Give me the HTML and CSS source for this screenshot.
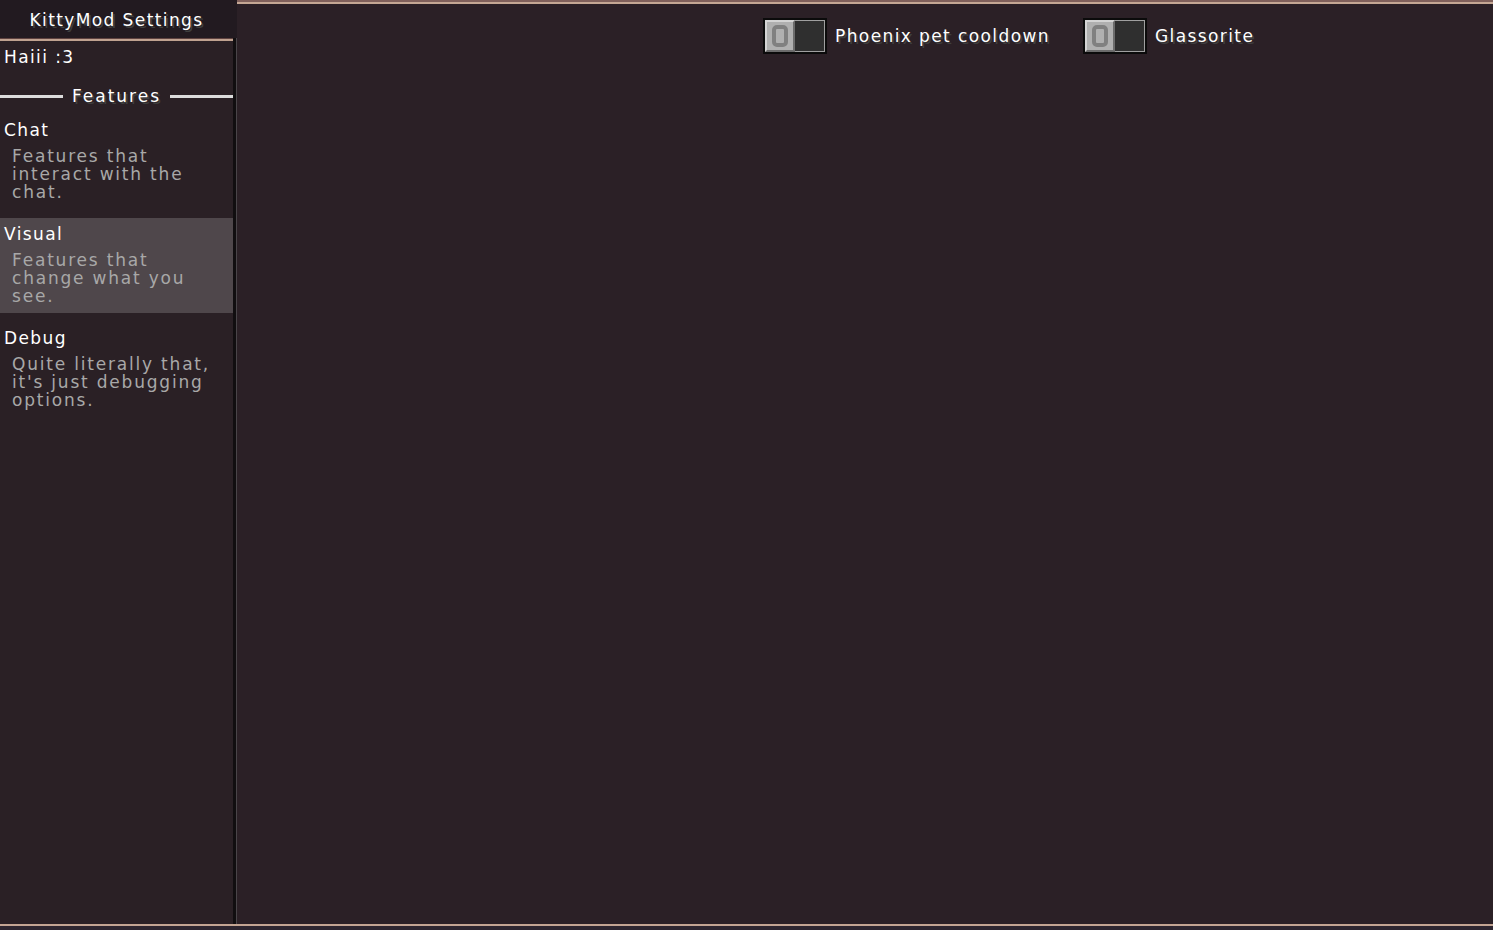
FILE: index.html
```html
<!DOCTYPE html>
<html lang="en">
<head>
    <meta charset="UTF-8">
    <meta name="viewport" content="width=device-width, initial-scale=1.0">
    <title>KittyMod Settings</title>
    <link rel="stylesheet" href="styles.css">
</head>
<body>
    <div class="screen">
        <div class="side">
            <div class="header">KittyMod Settings</div>
            <div class="nav">
                <div class="nav-rule"></div>
                <div class="greeting">Haiii :3</div>
                <div class="section">
                    <span class="section-line"></span>
                    <span class="section-title">Features</span>
                    <span class="section-line"></span>
                </div>
                <div class="category">
                    <div class="category-name">Chat</div>
                    <div class="category-desc">Features that<br>interact with the<br>chat.</div>
                </div>
                <div class="category selected">
                    <div class="category-name">Visual</div>
                    <div class="category-desc">Features that<br>change what you<br>see.</div>
                </div>
                <div class="category">
                    <div class="category-name">Debug</div>
                    <div class="category-desc">Quite literally that,<br>it's just debugging<br>options.</div>
                </div>
            </div>
        </div>

        <div class="content">
            <div class="content-rule"></div>
            <div class="options">
                <div class="option">
                    <div class="toggle"><span class="knob"><span class="knob-o"></span></span></div>
                    <span class="option-label">Phoenix pet cooldown</span>
                </div>
                <div class="option">
                    <div class="toggle"><span class="knob"><span class="knob-o"></span></span></div>
                    <span class="option-label">Glassorite</span>
                </div>
            </div>
        </div>
    </div>
    <div class="footer"></div>
</body>
</html>
```

FILE: styles.css
```css
body {
    margin: 0;
    padding: 0;
    background-color: #2b2026;
    font-family: "DejaVu Sans", sans-serif;
    font-size: 17px;
    line-height: 18px;
    letter-spacing: 1.4px;
    color: #fff;
    width: 1493px;
    height: 930px;
    overflow: hidden;
}

.screen {
    display: grid;
    grid-template-columns: 237px 1fr;
    height: 924px;
}

/* left column */

.side {
    display: flex;
    flex-direction: column;
}

.header {
    height: 38px;
    width: 233px;
    padding-right: 4px;
    box-sizing: content-box;
    background-color: #221a20;
    display: flex;
    justify-content: center;
    align-items: center;
    padding-top: 1px;
    margin-bottom: -1px;
    text-shadow: 2px 2px 0 #3f3f3f;
}

.nav {
    flex: 1;
    width: 233px;
    background-color: #2a2025;
    border-right: 3px solid #110e10;
    box-shadow: 1px 0 0 #4a4549;
}

.nav-rule {
    height: 2px;
    border-top: 1px solid #5e423f;
    background-color: #c0a290;
}

.greeting {
    padding: 7px 0 0 4px;
}

.section {
    display: flex;
    align-items: center;
    gap: 9px;
    margin-top: 21px;
}

.section-line {
    flex: 1;
    height: 3px;
    background-color: #dcdcdc;
}

.section-title {
    letter-spacing: 2px;
    text-shadow: 2px 2px 0 #3f3f3f;
}

.category {
    height: 95px;
    box-sizing: border-box;
    padding: 7px 0 0 4px;
    margin-top: 9px;
}

.category.selected {
    background-color: #4f474b;
}

.category-desc {
    margin-top: 8px;
    padding-left: 8px;
    color: #a8a8a8;
    letter-spacing: 1.8px;
    white-space: nowrap;
}

/* right column */

.content-rule {
    height: 2px;
    border-top: 2px solid #80605b;
    background-color: #c5a794;
}

.options {
    display: grid;
    grid-template-columns: repeat(2, 320px);
    padding-left: 526px;
    margin-top: 14px;
}

.option {
    display: flex;
    align-items: center;
}

.toggle {
    display: flex;
    width: 60px;
    height: 32px;
    border: 2px solid #0b0b0b;
    background-color: #2f2f2f;
    box-shadow: inset -1px 0 0 #a0a0a0, inset 0 1px 0 #a0a0a0, inset 0 -1px 0 #a0a0a0;
}

.knob {
    width: 30px;
    height: 32px;
    box-sizing: border-box;
    background-color: #b0b0b0;
    border: 2px solid;
    border-color: #d4d4d4 #6c6c6c #6c6c6c #d4d4d4;
    display: flex;
    justify-content: center;
    align-items: center;
}

.knob-o {
    width: 16px;
    height: 22px;
    box-sizing: border-box;
    border: 4px solid #808080;
    border-radius: 5px;
}

.option-label {
    margin-left: 8px;
    text-shadow: 2px 2px 0 #3f3f3f;
}

.footer {
    height: 4px;
    border-top: 2px solid #c4a593;
    background-color: #2e2630;
}
```
